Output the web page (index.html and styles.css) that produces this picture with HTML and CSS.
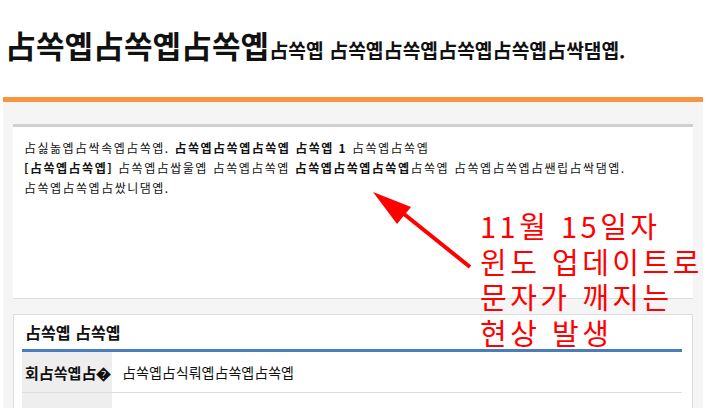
FILE: index.html
```html
<!DOCTYPE html>
<html lang="ko">
<head>
<meta charset="UTF-8">
<title>占쏙옙占쏙옙占쏙옙</title>
<link rel="stylesheet" href="styles.css">
</head>
<body>
	<div class="page">
		<h1 class="title"><span class="title-big">占쏙옙占쏙옙占쏙옙</span><span class="title-small">占쏙옙 占쏙옙占쏙옙占쏙옙占쏙옙占싹댐옙.</span></h1>
		<div class="bar"></div>
		<div class="panel">
			<div class="notice">
				<p>占싫놂옙占싹속옙占쏙옙. <b>占쏙옙占쏙옙占쏙옙 占쏙옙 1</b> 占쏙옙占쏙옙<br>
				<b>[占쏙옙占쏙옙]</b> 占쏙옙占쌉울옙 占쏙옙占쏙옙 <b>占쏙옙占쏙옙占쏙옙</b>占쏙옙 占쏙옙占쏙옙占쌘립占싹댐옙.<br>
				占쏙옙占쏙옙占쌌니댐옙.</p>
			</div>
			<div class="box">
				<h2>占쏙옙 占쏙옙</h2>
				<table>
					<tr>
						<th>회占쏙옙占�</th>
						<td>占쏙옙占식뤄옙占쏙옙占쏙옙</td>
					</tr>
					<tr>
						<th>&nbsp;</th>
						<td>&nbsp;</td>
					</tr>
				</table>
			</div>
		</div>
	</div>

	<!-- 설명 메모 -->
	<svg class="arrow" width="120" height="100" viewBox="0 0 120 100">
		<line x1="44" y1="34" x2="110" y2="87" stroke="#ff0000" stroke-width="4"/>
		<polygon points="13,12 51,27 37,44" fill="#ff0000"/>
	</svg>
	<div class="memo">
		<div>11월 15일자</div>
		<div>윈도 업데이트로</div>
		<div>문자가 깨지는</div>
		<div>현상 발생</div>
	</div>
</body>
</html>
```

FILE: styles.css
```css
* {
	margin: 0;
	padding: 0;
}
body {
	font-family: "Noto Sans CJK KR", "Liberation Sans", sans-serif;
	color: #111;
	background: #fff;
}
.page {
	width: 700px;
	margin-left: 3px;
}
.title {
	height: 97px;
	box-sizing: border-box;
	padding: 24px 0 0 2px;
	line-height: 40px;
	white-space: nowrap;
}
.title-big {
	font-size: 31px;
}
.title-small {
	font-size: 19.2px;
}
.bar {
	height: 5px;
	background: #f7963d;
}
.panel {
	background: #f5f5f5;
	padding: 22px 10px 0 10px;
	height: 320px;
}
.notice {
	background: #fff;
	border-top: 3px solid #cfcfcf;
	border-bottom: 1px solid #ddd;
	height: 160px;
	padding: 11px 11px 0 11px;
	font-size: 12px;
	letter-spacing: 1.5px;
	line-height: 20px;
	white-space: nowrap;
}
.box {
	margin-top: 15px;
	background: #fff;
	border: 1px solid #ddd;
	padding: 0 10px 0 8px;
	height: 200px;
}
.box h2 {
	height: 34px;
	line-height: 34px;
	font-size: 16px;
	padding-left: 3px;
	border-bottom: 3px solid #4a7dbb;
}
table {
	width: 100%;
	border-collapse: collapse;
}
th, td {
	height: 40px;
	border-bottom: 1px solid #ddd;
	text-align: left;
	white-space: nowrap;
}
th {
	width: 87px;
	padding-left: 3px;
	background: #eee;
	font-size: 15px;
}
td {
	padding-left: 10px;
	font-size: 14px;
	font-weight: normal;
}
.arrow {
	position: absolute;
	left: 360px;
	top: 180px;
}
.memo {
	position: absolute;
	left: 480px;
	top: 208px;
	display: flex;
	flex-direction: column;
	gap: 0.5px;
	font-size: 29px;
	line-height: 35px;
	letter-spacing: 3.5px;
	color: #ff0000;
	white-space: nowrap;
}
```
